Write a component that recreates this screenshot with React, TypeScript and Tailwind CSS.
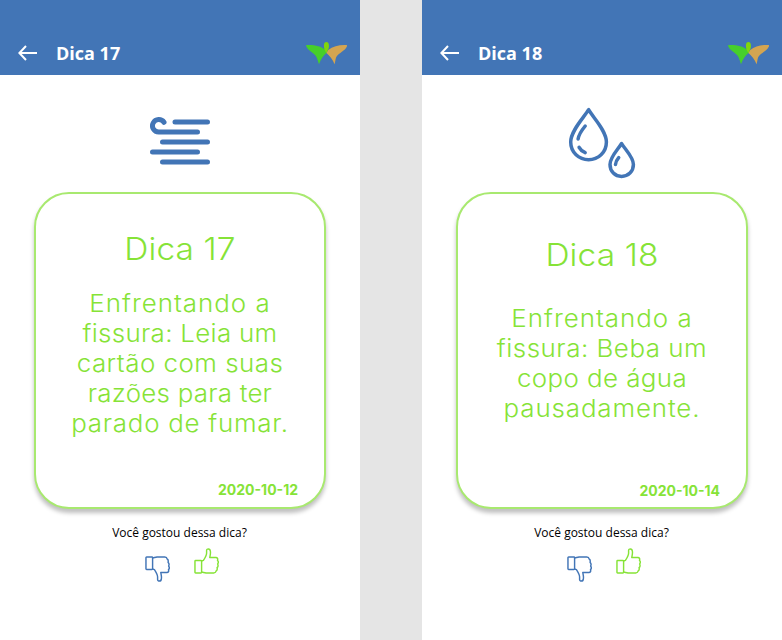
import type { ReactNode } from "react";

type Line = { text: string; tracking: string };

function Arrow() {
  return (
    <svg width="20" height="16" viewBox="0 0 20 16" fill="none" stroke="white" strokeWidth="2">
      <path d="M19 8H1.8M8 1L1.4 8L8 15" />
    </svg>
  );
}

function Logo() {
  return (
    <svg width="42" height="24" viewBox="0 0 42 24">
      <path d="M0.6 4.1C8 3.7 15 5 19.4 9L20.4 12C17.5 14.5 15 18 13 23.2C12 20.5 11.4 18 10.5 16.3C9 12.2 2 9.8 0.3 5.5Q-.2 4.2 .6 4.1Z" fill="#46cf2b" />
      <path d="M40.6 4.1C34 3.7 27 5 22.2 9L20.4 12C23.6 14.5 26.6 18.5 28.6 23.2C29.6 19 29.5 17 30.6 15.4C32.9 12 39.1 9.8 40.9 5.5Q41.4 4.2 40.6 4.1Z" fill="#d4a551" />
      <path d="M20.4 1C23 1 23.4 4.5 22.6 7.5L20.4 12.3L18.5 8.5C17.4 4.5 17.8 1 20.4 1Z" fill="#82d60b" />
    </svg>
  );
}

function TextIcon() {
  return (
    <svg width="60" height="50" viewBox="0 0 60 50" fill="none" stroke="#4275b6" strokeWidth="5" strokeLinecap="round">
      <path d="M25 7H57.5M14 7.3A6.3 6.2 0 1 0 8.7 17H47.5M12.5 27H57.5M2.5 37H47.5M12.5 47H57.5" />
    </svg>
  );
}

function DropsIcon() {
  return (
    <svg width="68" height="72" viewBox="0 0 68 72" fill="none" stroke="#4275b6" strokeWidth="3.5" strokeLinecap="round" strokeLinejoin="round">
      <path d="M20.6 2.7C16 10.5 2.7 23.5 2.7 35C2.7 45.5 11 52.7 20.6 52.7S38.4 45.5 38.4 35C38.4 23.5 25 10.5 20.6 2.7ZM53.6 36.5C50 42.5 42 50 42 57.5C42 64.5 47 69.4 53.6 69.4S65.4 64.5 65.4 57.5C65.4 50 57 42.5 53.6 36.5Z" />
      <path d="M17.2 19Q11 26.5 10.1 32M11.1 40.4Q13 44 17.2 45.7M50.7 50.6Q47.7 54 47.5 57.5" />
    </svg>
  );
}

function Thumb({ down = false }: { down?: boolean }) {
  return (
    <svg width="25" height="26" viewBox="0 0 26 26" preserveAspectRatio="none" fill="none" stroke="currentColor" strokeWidth="1.5" strokeLinejoin="round" className={down ? "-scale-y-100 text-[#4275b6]" : "text-[#86e337]"}>
      <path d="M1.7 12.6H7.2Q7.9 12.6 7.9 13.3V24.2Q7.9 24.9 7.2 24.9H1.7Q1 24.9 1 24.2V13.3Q1 12.6 1.7 12.6Z" />
      <path d="M7.9 13L9.8 12.4C11 10.6 13 7.5 13.1 5.2V2.5C13.1 .4 16.8 .1 17 3.1C17.5 5.5 16.7 7.7 16.4 9.5H22.8C24.4 9.5 25 10.8 24.4 12.3C25.4 13.3 25.3 15 24.6 16C25.2 17.3 25 18.9 24 19.7C24.4 21.2 24 22.5 23 23C22.8 24.4 22 24.8 20.5 24.9H12.5C10.6 24.8 9.5 24.1 7.9 24" />
    </svg>
  );
}

type TipProps = {
  title: string;
  icon: ReactNode;
  iconClass: string;
  titleClass: string;
  bodyClass: string;
  lines: Line[];
  date: string;
  dateClass: string;
};

function Tip({ title, icon, iconClass, titleClass, bodyClass, lines, date, dateClass }: TipProps) {
  return (
    <section className="h-[640px] w-[360px] shrink-0 bg-white">
      <header className="flex h-[75px] items-start bg-[#4275b6] pl-[18px] pr-3">
        <div className="mt-[45px]"><Arrow /></div>
        <h1 className="ml-[18px] mt-10 font-['Open_Sans',sans-serif] text-lg leading-[27px] font-bold text-white">{title}</h1>
        <div className="ml-auto mt-[41px]"><Logo /></div>
      </header>
      <div className={`flex h-[117px] justify-center ${iconClass}`}>{icon}</div>
      <article className="mx-auto flex h-[317px] w-[292px] flex-col rounded-[35px] border-2 border-[#a8e96f] bg-white text-center font-['Inter',sans-serif] text-[#86e337] shadow-[0_4px_4px_rgba(0,0,0,0.25)]">
        <h2 className={`scale-x-108 text-[31px] leading-10 font-light tracking-[0.1px] ${titleClass}`}>{title}</h2>
        <p className={`scale-x-108 text-2xl leading-[30px] font-light ${bodyClass}`}>
          {lines.map((line) => (
            <span key={line.text} className={`block whitespace-nowrap ${line.tracking}`}>{line.text}</span>
          ))}
        </p>
        <time className={`mt-auto pr-[26px] text-right text-sm leading-5 font-bold ${dateClass}`}>{date}</time>
      </article>
      <p className="mt-[15px] pr-px text-center font-['Open_Sans',sans-serif] text-xs leading-[17px] text-black">Você gostou dessa dica?</p>
      <div className="mt-[7px] flex justify-center gap-6 pl-[3px]">
        <div className="pt-2"><Thumb down /></div>
        <Thumb />
      </div>
    </section>
  );
}

export default function App() {
  return (
    <main className="flex h-[640px] w-[782px] justify-between overflow-hidden bg-[#e5e5e5]">
      <Tip
        title="Dica 17"
        icon={<TextIcon />}
        iconClass="pt-10"
        titleClass="mt-[35px]"
        bodyClass="mt-5"
        date="2020-10-12"
        dateClass="pb-[7px]"
        lines={[
          { text: "Enfrentando a", tracking: "tracking-[0.9px]" },
          { text: "fissura: Leia um", tracking: "tracking-[0.27px]" },
          { text: "cartão com suas", tracking: "tracking-[0.44px]" },
          { text: "razões para ter", tracking: "tracking-[0.2px]" },
          { text: "parado de fumar.", tracking: "tracking-[0.67px]" },
        ]}
      />
      <Tip
        title="Dica 18"
        icon={<DropsIcon />}
        iconClass="pt-8"
        titleClass="mt-[41px]"
        bodyClass="mt-[29px]"
        date="2020-10-14"
        dateClass="pb-1.5"
        lines={[
          { text: "Enfrentando a", tracking: "tracking-[0.9px]" },
          { text: "fissura: Beba um", tracking: "tracking-[0.47px]" },
          { text: "copo de água", tracking: "tracking-[0.37px]" },
          { text: "pausadamente.", tracking: "tracking-[0.8px]" },
        ]}
      />
    </main>
  );
}
